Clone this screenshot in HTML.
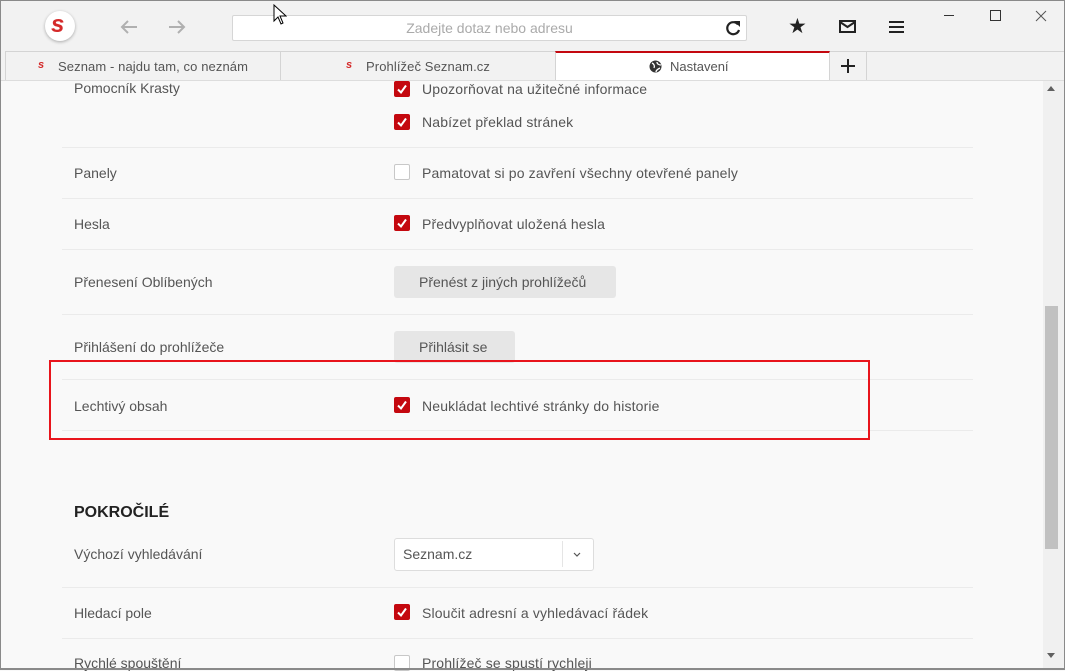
<!DOCTYPE html>
<html><head><meta charset="utf-8"><style>
*{margin:0;padding:0;box-sizing:border-box}
body{width:1065px;height:670px;overflow:hidden;background:#f9f9f9;font-family:"Liberation Sans",sans-serif;position:relative;color:#555}
.a{position:absolute}
.lab{position:absolute;left:74px;font-size:14px;color:#555;line-height:16px}
.sep{position:absolute;left:62px;width:911px;height:1px;background:#ebebeb}
.cb{position:absolute;left:394px;width:16px;height:16px;border-radius:2px;background:#c4080f}
.cb svg{position:absolute;left:2px;top:2px}
.ucb{position:absolute;left:394px;width:16px;height:16px;border-radius:2px;background:#fff;border:1px solid #c8c8c8}
.ct{position:absolute;left:422px;font-size:14px;color:#555;line-height:16px;letter-spacing:0.15px}
.btn{position:absolute;left:394px;background:#e6e6e6;border-radius:3px;font-size:14px;color:#555;line-height:16px}
</style></head><body>
<div class="a" style="left:0;top:0;width:1065px;height:80px;background:#f2f2f2"></div>
<div class="a" style="left:45px;top:11px;width:30px;height:30px;border-radius:50%;background:#fff;box-shadow:0 1px 3px rgba(0,0,0,.3)"></div>
<div class="a" style="left:51px;top:11px;font-size:24px;font-weight:bold;font-style:italic;color:#d42a2a">s</div>
<svg class="a" style="left:119px;top:18px" width="20" height="18"><path d="M18 9H3M9 3L3 9l6 6" stroke="#b0b0b0" stroke-width="2" fill="none"/></svg>
<svg class="a" style="left:167px;top:18px" width="20" height="18"><path d="M2 9h15M11 3l6 6-6 6" stroke="#b0b0b0" stroke-width="2" fill="none"/></svg>
<div class="a" style="left:232px;top:15px;width:515px;height:26px;background:#fff;border:1px solid #d6d6d6;border-radius:2px"></div>
<div class="a" style="left:232px;top:20px;width:515px;text-align:center;font-size:14px;color:#aaa">Zadejte dotaz nebo adresu</div>
<svg class="a" style="left:724px;top:19px" width="18" height="18"><path d="M14 5.5A6 6 0 1 0 15 11" stroke="#222" stroke-width="2.2" fill="none"/><path d="M10 2h6v6z" fill="#222"/></svg>
<div class="a" style="left:788px;top:14px;font-size:21px;color:#222">★</div>
<svg class="a" style="left:839px;top:20px" width="18" height="14"><rect x="1" y="1" width="15" height="11" fill="none" stroke="#222" stroke-width="2"/><path d="M1 2l7.5 5L16 2" stroke="#222" stroke-width="2" fill="none"/></svg>
<svg class="a" style="left:889px;top:20px" width="16" height="14"><path d="M0 2h15M0 7h15M0 12h15" stroke="#222" stroke-width="2"/></svg>
<div class="a" style="left:944px;top:15px;width:10px;height:1px;background:#333"></div>
<div class="a" style="left:990px;top:10px;width:11px;height:11px;border:1px solid #333"></div>
<svg class="a" style="left:1035px;top:10px" width="12" height="12"><path d="M1 1l10 10M11 1L1 11" stroke="#555" stroke-width="1"/></svg>
<div class="a" style="left:5px;top:51px;width:1060px;height:1px;background:#d4d4d4"></div>
<div class="a" style="left:5px;top:51px;width:1px;height:29px;background:#d4d4d4"></div>
<div class="a" style="left:280px;top:51px;width:1px;height:29px;background:#d4d4d4"></div>
<div class="a" style="left:38px;top:59px;font-size:11px;font-weight:bold;font-style:italic;color:#d42a2a">s</div>
<div class="a" style="left:58px;top:59px;font-size:13px;color:#555;letter-spacing:0.1px">Seznam - najdu tam, co neznám</div>
<div class="a" style="left:346px;top:59px;font-size:11px;font-weight:bold;font-style:italic;color:#d42a2a">s</div>
<div class="a" style="left:366px;top:59px;font-size:13px;color:#555;letter-spacing:0.1px">Prohlížeč Seznam.cz</div>
<div class="a" style="left:555px;top:51px;width:275px;height:30px;background:#fff;border-top:2px solid #c4080f;border-right:1px solid #d4d4d4;border-left:1px solid #d4d4d4"></div>
<svg class="a" style="left:649px;top:60px" width="13" height="13"><circle cx="6.5" cy="6.5" r="6" fill="#333"/><path d="M3 3c2 1 3 3 2 5M8 2c0 2 2 3 4 3M7 12c0-2 2-3 4-4" stroke="#fff" stroke-width="1.3" fill="none"/></svg>
<div class="a" style="left:670px;top:59px;font-size:13px;color:#555">Nastavení</div>
<div class="a" style="left:866px;top:51px;width:1px;height:29px;background:#d4d4d4"></div>
<svg class="a" style="left:841px;top:59px" width="14" height="14"><path d="M7 0v14M0 7h14" stroke="#222" stroke-width="2"/></svg>
<div class="a" style="left:0;top:80px;width:1065px;height:1px;background:#ddd"></div>
<div class="lab" style="top:80px">Pomocník Krasty</div>
<div class="cb" style="top:81px"><svg width="12" height="12"><path d="M2 6.5l3 3 5-7" stroke="#fff" stroke-width="2" fill="none"/></svg></div>
<div class="ct" style="top:81px">Upozorňovat na užitečné informace</div>
<div class="cb" style="top:114px"><svg width="12" height="12"><path d="M2 6.5l3 3 5-7" stroke="#fff" stroke-width="2" fill="none"/></svg></div>
<div class="ct" style="top:114px">Nabízet překlad stránek</div>
<div class="sep" style="top:147px"></div>
<div class="lab" style="top:165px">Panely</div>
<div class="ucb" style="top:164px"></div>
<div class="ct" style="top:165px">Pamatovat si po zavření všechny otevřené panely</div>
<div class="sep" style="top:198px"></div>
<div class="lab" style="top:216px">Hesla</div>
<div class="cb" style="top:215px"><svg width="12" height="12"><path d="M2 6.5l3 3 5-7" stroke="#fff" stroke-width="2" fill="none"/></svg></div>
<div class="ct" style="top:216px">Předvyplňovat uložená hesla</div>
<div class="sep" style="top:249px"></div>
<div class="lab" style="top:274px">Přenesení Oblíbených</div>
<div class="btn" style="top:266px;width:222px;height:32px;padding:8px 0 0 25px">Přenést z jiných prohlížečů</div>
<div class="sep" style="top:314px"></div>
<div class="lab" style="top:339px">Přihlášení do prohlížeče</div>
<div class="btn" style="top:331px;width:121px;height:32px;padding:8px 0 0 25px">Přihlásit se</div>
<div class="sep" style="top:379px"></div>
<div class="lab" style="top:398px">Lechtivý obsah</div>
<div class="cb" style="top:397px"><svg width="12" height="12"><path d="M2 6.5l3 3 5-7" stroke="#fff" stroke-width="2" fill="none"/></svg></div>
<div class="ct" style="top:398px">Neukládat lechtivé stránky do historie</div>
<div class="sep" style="top:430px"></div>
<div class="a" style="left:49px;top:360px;width:821px;height:80px;border:2px solid #e8141c"></div>
<div class="a" style="left:74px;top:504px;font-size:16px;font-weight:bold;color:#222">POKROČILÉ</div>
<div class="lab" style="top:546px">Výchozí vyhledávání</div>
<div class="a" style="left:394px;top:538px;width:200px;height:33px;background:#fff;border:1px solid #ddd;border-radius:3px"></div>
<div class="a" style="left:403px;top:546px;font-size:14px;color:#555">Seznam.cz</div>
<div class="a" style="left:562px;top:541px;width:1px;height:26px;background:#e5e5e5"></div>
<svg class="a" style="left:573px;top:552px" width="8" height="6"><path d="M1 1l3 3 3-3" stroke="#555" stroke-width="1.2" fill="none"/></svg>
<div class="sep" style="top:587px"></div>
<div class="lab" style="top:605px">Hledací pole</div>
<div class="cb" style="top:604px"><svg width="12" height="12"><path d="M2 6.5l3 3 5-7" stroke="#fff" stroke-width="2" fill="none"/></svg></div>
<div class="ct" style="top:605px">Sloučit adresní a vyhledávací řádek</div>
<div class="sep" style="top:638px"></div>
<div class="lab" style="top:655px">Rychlé spouštění</div>
<div class="ucb" style="top:655px"></div>
<div class="ct" style="top:655px">Prohlížeč se spustí rychleji</div>
<div class="a" style="left:1043px;top:81px;width:21px;height:588px;background:#f0f0f0"></div>
<div class="a" style="left:1045px;top:306px;width:13px;height:243px;background:#c1c1c1"></div>
<svg class="a" style="left:1047px;top:86px" width="8" height="5"><path d="M0 5L4 0l4 5z" fill="#606060"/></svg>
<svg class="a" style="left:1047px;top:653px" width="8" height="5"><path d="M0 0h8L4 5z" fill="#606060"/></svg>
<div class="a" style="left:0;top:0;width:1065px;height:670px;border:1px solid #8a8a8a;border-bottom-width:2px"></div>
<svg class="a" style="left:273px;top:4px" width="14" height="22"><path d="M1 1v16l4-4 3 7 2-1-3-7h6z" fill="#fff" stroke="#000" stroke-width="1"/></svg>
</body></html>
